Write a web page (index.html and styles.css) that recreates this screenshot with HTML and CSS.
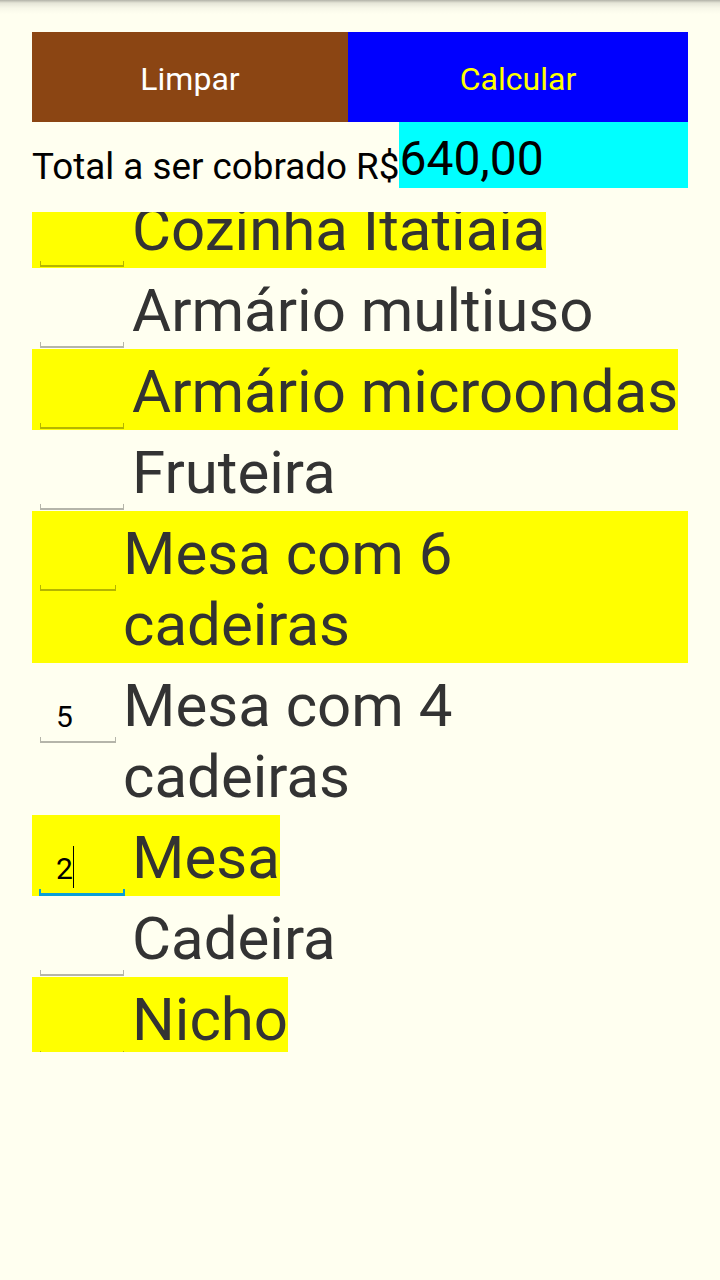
FILE: index.html
```html
<!DOCTYPE html>
<html lang="pt-BR">
<head>
<meta charset="utf-8">
<title>Calculadora</title>
<link rel="stylesheet" href="styles.css">
</head>
<body>
<div class="topshadow"></div>
<main class="app">
  <div class="buttons">
    <div class="btn btn-clear">Limpar</div>
    <div class="btn btn-calc">Calcular</div>
  </div>
  <div class="total">
    <span class="total-label">Total a ser cobrado R$</span>
    <span class="total-value">640,00</span>
  </div>
  <div class="list">
    <div class="items">
      <div class="row hl">
        <div class="field"><div class="val"></div><div class="uline"></div></div>
        <span class="name">Cozinha Itatiaia</span>
      </div>
      <div class="row">
        <div class="field"><div class="val"></div><div class="uline"></div></div>
        <span class="name">Armário multiuso</span>
      </div>
      <div class="row hl">
        <div class="field"><div class="val"></div><div class="uline"></div></div>
        <span class="name">Armário microondas</span>
      </div>
      <div class="row">
        <div class="field"><div class="val"></div><div class="uline"></div></div>
        <span class="name">Fruteira</span>
      </div>
      <div class="row hl double">
        <div class="field"><div class="val"></div><div class="uline"></div></div>
        <span class="name">Mesa com 6<br>cadeiras</span>
      </div>
      <div class="row double">
        <div class="field"><div class="val">5</div><div class="uline"></div></div>
        <span class="name">Mesa com 4<br>cadeiras</span>
      </div>
      <div class="row hl">
        <div class="field focused"><div class="val"><span class="caret">2</span></div><div class="uline"></div></div>
        <span class="name">Mesa</span>
      </div>
      <div class="row">
        <div class="field"><div class="val"></div><div class="uline"></div></div>
        <span class="name">Cadeira</span>
      </div>
      <div class="row hl">
        <div class="field"><div class="val"></div><div class="uline"></div></div>
        <span class="name">Nicho</span>
      </div>
    </div>
  </div>
</main>
</body>
</html>
```
FILE: styles.css
```css
html, body {
  margin: 0;
  padding: 0;
}
body {
  background: #FFFFF0;
  font-family: Roboto, "Noto Sans", "Liberation Sans", sans-serif;
  width: 720px;
  height: 1280px;
  overflow: hidden;
}
.topshadow {
  height: 14px;
  background: linear-gradient(to bottom, rgba(0,0,0,0.30) 0px, rgba(0,0,0,0.10) 3px, rgba(0,0,0,0.03) 8px, rgba(0,0,0,0) 14px);
}
.app {
  padding: 18px 32px 0 32px;
}
.buttons {
  display: flex;
  height: 90px;
}
.btn {
  display: flex;
  align-items: center;
  justify-content: center;
  font-size: 32px;
  padding-top: 3px;
  box-sizing: border-box;
}
.btn-clear {
  width: 316px;
  background: #8B4513;
  color: #FFFFFF;
}
.btn-calc {
  flex: 1;
  background: #0000FF;
  color: #FFFF00;
}
.total {
  display: flex;
  height: 66px;
}
.total-label {
  align-self: flex-end;
  font-size: 36.8px;
  color: #000;
  white-space: nowrap;
}
.total-value {
  flex: 1;
  background: #00FFFF;
  color: #000;
  font-size: 48px;
  padding-top: 8px;
  box-sizing: border-box;
}
.list {
  margin-top: 24px;
  height: 840px;
  overflow: hidden;
}
.items {
  margin-top: -25px;
  display: flex;
  flex-direction: column;
  align-items: flex-start;
}
.row {
  display: flex;
  align-items: flex-start;
}
.row.double {
  align-self: stretch;
}
.hl {
  background: #FFFF00;
}
.field {
  width: 92px;
  height: 81px;
  flex: none;
  display: flex;
  flex-direction: column;
  justify-content: flex-end;
  padding-bottom: 1px;
  box-sizing: border-box;
}
.double .field {
  width: 84px;
}
.val {
  height: 35px;
  line-height: 35px;
  font-size: 30px;
  color: #000;
  padding-left: 24px;
  margin-bottom: 3px;
}
.caret {
  border-right: 1px solid #000;
  padding-top: 5px;
  padding-bottom: 2px;
}
.uline {
  height: 4px;
  margin-left: 8px;
  border: 1px solid rgba(0,0,0,0.29);
  border-top: none;
  border-bottom-width: 2px;
}
.focused .uline {
  margin-left: 7px;
  margin-right: -1px;
  height: 4px;
  border-color: #0a9fd6;
  border-left-width: 2px;
  border-right-width: 2px;
  border-bottom-width: 3px;
}
.focused {
  padding-bottom: 0;
}
.name {
  font-size: 60px;
  line-height: 71px;
  color: #333333;
  padding: 7px 0 3px 0;
  margin-left: 8px;
  white-space: nowrap;
}
.double .name {
  margin-left: 7px;
}
```
